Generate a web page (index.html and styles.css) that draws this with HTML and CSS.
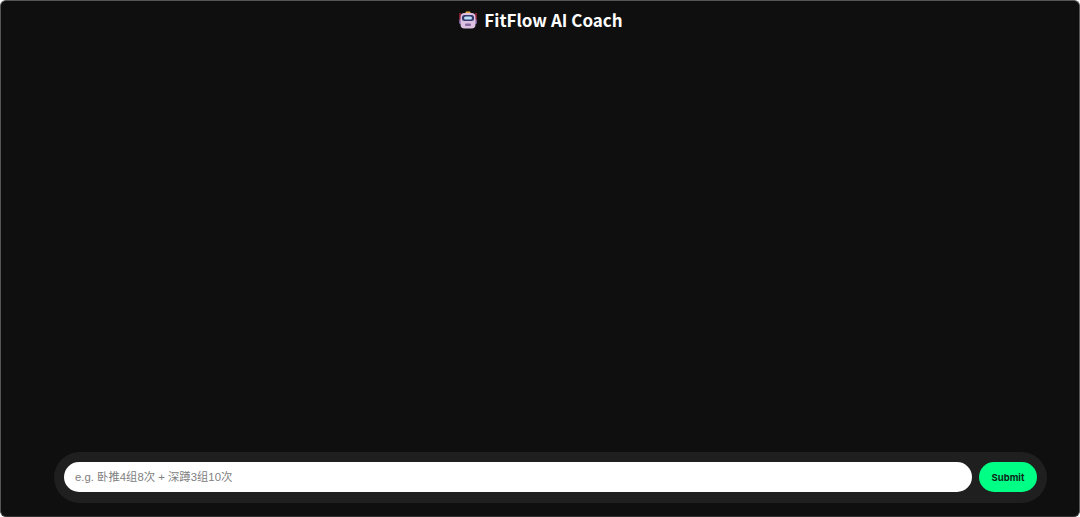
FILE: index.html
```html
<!DOCTYPE html>
<html lang="zh">
<head>
    <meta charset="UTF-8">
    <meta name="viewport" content="width=device-width, initial-scale=1.0">
    <title>FitFlow AI Coach</title>
    <link rel="stylesheet" href="styles.css">
</head>
<body>
    <div class="app">
        <h1 class="title">
            <!-- robot emoji -->
            <svg class="robot" viewBox="0 0 20 20" width="20" height="20">
                <path d="M2 3 L2 10" stroke="#a8233a" stroke-width="1.5" fill="none"/>
                <path d="M18 3 L18 10" stroke="#a8233a" stroke-width="1.5" fill="none"/>
                <path d="M7 3.5 L8 1.5 L12 1.5 L13 3.5 Z" fill="#e8b04a"/>
                <rect x="1" y="9" width="18" height="5" rx="1.5" fill="#7d5f9c"/>
                <rect x="2.5" y="3" width="15" height="15.5" rx="4" fill="#dcc0e2"/>
                <rect x="4" y="5" width="12" height="6" rx="2.5" fill="#34386a"/>
                <rect x="6" y="6.5" width="8" height="3" rx="1.5" fill="#b9dcf7"/>
                <rect x="7" y="13.5" width="6" height="2.5" rx="1" fill="#8a6a9e"/>
            </svg>
            <span>FitFlow AI Coach</span>
        </h1>
        <div class="chat-area"></div>
        <form class="input-bar">
            <input class="question" type="text" placeholder="e.g. 卧推4组8次 + 深蹲3组10次">
            <button class="submit" type="button">Submit</button>
        </form>
    </div>
</body>
</html>
```

FILE: styles.css
```css
html, body {
    margin: 0;
    padding: 0;
    height: 100%;
    background-color: #fff;
}
.app {
    box-sizing: border-box;
    height: 517px;
    display: flex;
    flex-direction: column;
    background-color: #0f0f0f;
    border: 1px solid #555;
    border-bottom-color: #333;
    border-radius: 6px;
    overflow: hidden;
}
.title {
    margin: 0;
    padding-top: 4px;
    padding-left: 1px;
    height: 30px;
    display: flex;
    justify-content: center;
    align-items: center;
    gap: 6px;
    color: #fff;
    font-family: "Noto Sans CJK SC", "Noto Sans", sans-serif;
    font-size: 17px;
    font-weight: 700;
    line-height: 28px;
}
.robot {
    flex: none;
}
.chat-area {
    flex: 1;
}
.input-bar {
    display: flex;
    align-items: center;
    gap: 7px;
    margin: 0 32px 13px 53px;
    padding: 10px 10px 11px 10px;
    background-color: #1f1f1f;
    border-radius: 26px;
}
.question {
    flex: 1;
    box-sizing: border-box;
    height: 30px;
    padding: 0 11px;
    border: none;
    border-radius: 15px;
    background-color: #fff;
    font-family: "Liberation Sans", "Noto Sans CJK SC", sans-serif;
    font-size: 11.35px;
    outline: none;
}
.question::placeholder {
    color: #808080;
}
.submit {
    flex: none;
    width: 58px;
    height: 30px;
    padding: 0;
    border: none;
    border-radius: 15px;
    background-color: #00ff85;
    color: #0b2a1a;
    font-family: "Inter", sans-serif;
    font-size: 9.5px;
    font-weight: 700;
    cursor: pointer;
}
```
